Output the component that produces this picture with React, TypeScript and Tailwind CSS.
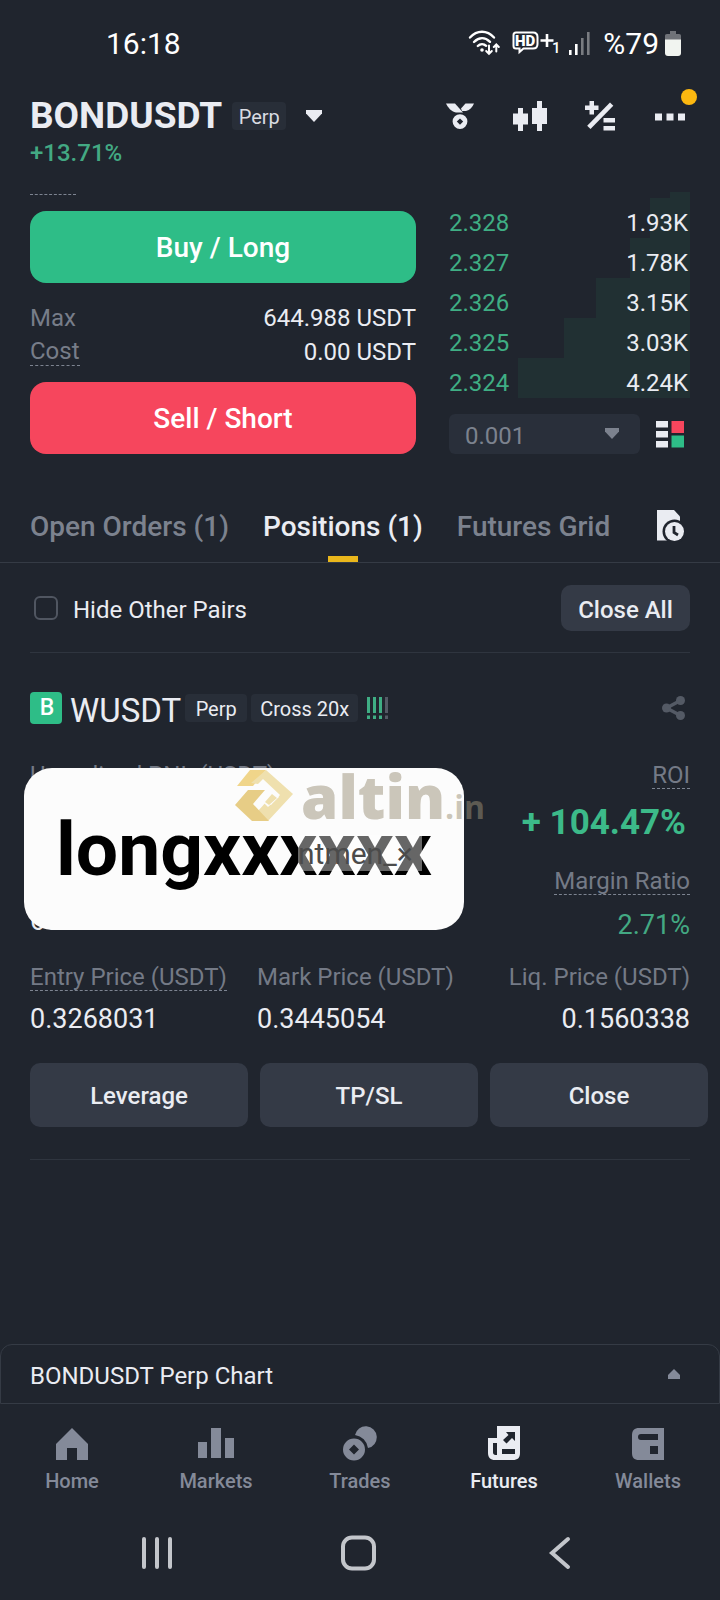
import { useState } from 'react'
import type { ReactNode } from 'react'

const bids = [
  { price: '2.328', amount: '1.93K', width: 40 },
  { price: '2.327', amount: '1.78K', width: 60 },
  { price: '2.326', amount: '3.15K', width: 94 },
  { price: '2.325', amount: '3.03K', width: 126 },
  { price: '2.324', amount: '4.24K', width: 172 },
]

const tabs = ['Open Orders (1)', 'Positions (1)', 'Futures Grid']

function StatusBar() {
  return (
    <div className="flex h-[92px] items-center justify-between pb-1.5 pr-[39px] pl-[106px] text-[30px] text-white">
      <span>16:18</span>
      <div className="flex items-center">
        <svg width="32" height="26" viewBox="0 0 32 26" fill="none" stroke="currentColor" strokeWidth="2.4" strokeLinecap="round">
          <path d="M2 7.5C9-.2 19-.2 26 7.5" />
          <path d="M6 12c5-5 11-5 16-.2" />
          <path d="M9.800 16c2.400-2.400 6-2.400 8.400-.2" />
          <circle cx="14" cy="20" r="1.800" fill="currentColor" stroke="none" />
          <path d="M21 15.500v8M18.200 21l2.800 2.800 2.800-2.800" strokeWidth="2" />
          <path d="M28.300 21.500v-7M25.800 17l2.500-2.600L30.800 17" strokeWidth="2" />
        </svg>
        <svg className="ml-3" width="48" height="26" viewBox="0 0 48 26" fill="none" stroke="currentColor">
          <path d="M4 2.500h17c3 0 4.500 1.800 4.500 4.500v7c0 3-1.500 4.500-4.500 4.500h-9.500L7.500 22v-3.500H4c-1.800 0-2.500-.8-2.500-2.500V5c0-1.700.7-2.500 2.500-2.500z" strokeWidth="2" />
          <text x="3" y="16" fontSize="15" fontWeight="900" fill="currentColor" stroke="none">HD</text>
          <path d="M28.500 10.500h13M35 4v13" strokeWidth="2.600" />
          <text x="40" y="23" fontSize="15" fontWeight="500" fill="currentColor" stroke="none">1</text>
        </svg>
        <svg className="ml-2" width="23" height="26" viewBox="0 0 23 26" fill="currentColor">
          <rect x="1" y="20" width="2.600" height="5" />
          <rect x="7" y="14" width="2.600" height="11" />
          <rect x="13" y="8" width="2.600" height="17" opacity=".4" />
          <rect x="19" y="2" width="2.600" height="23" opacity=".4" />
        </svg>
        <span className="ml-3">%79</span>
        <svg className="ml-1.5" width="16" height="25" viewBox="0 0 16 25">
          <path d="M5 0h6v3h3c1.500 0 2 .8 2 2v4H0V5c0-1.200.5-2 2-2h3z" fill="#6f7278" />
          <path d="M0 8.500h16V22c0 2-1 3-3 3H3c-2 0-3-1-3-3z" fill="#f1f4f0" />
        </svg>
      </div>
    </div>
  )
}

function Header() {
  return (
    <header className="pr-[33px] pl-[30px]">
      <div className="flex h-12 items-center justify-between">
        <button className="flex items-center" type="button">
          <span className="text-[37px] leading-10 font-bold">BONDUSDT</span>
          <span className="ml-2.5 flex h-7 w-[54px] items-center justify-center rounded bg-[#282e38] pt-0.5 text-xl text-[#d9dce2]">Perp</span>
          <svg className="ml-5" width="16" height="12" viewBox="0 0 16 12" fill="currentColor">
            <path d="M0 0h16v3.500L8 12 0 3.500z" />
          </svg>
        </button>
        <div className="flex items-center gap-9">
          <button type="button" aria-label="Rewards">
            <svg width="34" height="34" viewBox="0 0 34 34" fill="currentColor">
              <path d="M3 4.500h9l8 9h-7C8 12.500 5 8.500 3 4.500z" />
              <path d="M22.500 4.500H31c-1.500 3.500-4 6.500-8 7.500h-4l-1-2.500z" />
              <path fillRule="evenodd" d="M17 15.200a7.400 7.400 0 1 0 0 14.800 7.400 7.400 0 0 0 0-14.800zm0 4.200l3.200 3.200-3.200 3.200-3.200-3.200z" />
            </svg>
          </button>
          <button type="button" aria-label="Chart">
            <svg width="34" height="34" viewBox="0 0 34 34" fill="currentColor">
              <path d="M5 9h5v5.500h5v11h-5V32H5v-6.500H0v-11h5z" />
              <path d="M24 2h5v7h5v16h-5v7h-5v-7h-5V9h5z" />
            </svg>
          </button>
          <button type="button" aria-label="Calculator">
            <svg width="34" height="34" viewBox="0 0 34 34" fill="currentColor">
              <path d="M6.500 2h4.500v4.500h4.500V11H11v4.500H6.500V11H2V6.500h4.500z" />
              <path d="M27 3.500l3.300 3.300L7.500 30l-3.300-3.300z" />
              <path d="M20.500 19H32v4.500H20.500zM20.500 27H32v4.500H20.500z" />
            </svg>
          </button>
          <button type="button" aria-label="More" className="relative">
            <svg width="34" height="34" viewBox="0 0 34 34" fill="currentColor">
              <path d="M2 14.500h7v7H2zM13.500 14.500h7v7h-7zM25 14.500h7v7h-7z" />
            </svg>
            <span className="absolute -top-2.5 -right-2.5 size-4 rounded-full bg-[#fcb810]" />
          </button>
        </div>
      </div>
      <p className="pt-0.5 text-2xl leading-[22px] font-medium text-[#43a983]">+13.71%</p>
    </header>
  )
}

function OrderForm() {
  return (
    <div className="flex-[386]">
      <div className="h-[31px] w-[46px] border-b border-dashed border-[#7d8491]" />
      <button type="button" className="mt-4 h-[72px] w-full rounded-2xl bg-[#2ebd87] pt-0.5 text-[28px] font-medium text-white">Buy / Long</button>
      <dl className="mt-4 text-2xl">
        <div className="flex h-[34px] items-center justify-between">
          <dt className="pt-1 text-[#777d89]">Max</dt>
          <dd className="pt-1">644.988 USDT</dd>
        </div>
        <div className="flex h-[34px] items-center justify-between">
          <dt className="border-b border-dashed border-[#7d8491] pt-0.5 leading-7 text-[#777d89]">Cost</dt>
          <dd className="pt-1">0.00 USDT</dd>
        </div>
      </dl>
      <button type="button" className="mt-[15px] h-[72px] w-full rounded-2xl bg-[#f6465d] pt-0.5 text-[28px] font-medium text-white">Sell / Short</button>
    </div>
  )
}

function OrderBook() {
  return (
    <div className="flex-[241] pt-7">
      <div className="flex justify-end">
        <div className="h-1.5 w-5 bg-[#213033]" />
      </div>
      {bids.map((bid) => (
        <div key={bid.price} className="relative flex h-10 items-center justify-between pt-2.5 text-2xl">
          <div className="absolute inset-y-0 right-0 bg-[#213033]" style={{ width: bid.width }} />
          <span className="relative text-[#3fae84]">{bid.price}</span>
          <span className="relative pr-0.5">{bid.amount}</span>
        </div>
      ))}
      <div className="mt-4 flex items-center justify-between pr-1.5">
        <div className="relative w-[191px]">
          <select aria-label="Tick size" className="h-10 w-full appearance-none rounded-md bg-[#292f3a] pt-1 pl-4 text-2xl text-[#7c828e]">
            <option>0.001</option>
          </select>
          <svg className="pointer-events-none absolute top-3.5 right-[21px]" width="14" height="11" viewBox="0 0 14 11" fill="#7c828e">
            <path d="M0 0h14v3.500L7 11 0 3.500z" />
          </svg>
        </div>
        <button type="button" aria-label="Order book layout">
          <svg width="28" height="28" viewBox="0 0 28 28">
            <path d="M0 1h12v6.500H0zM0 11h12v6.500H0zM0 21h12v6.500H0z" fill="#eaecf2" />
            <path d="M15.500 1H28v12H15.500z" fill="#f6465d" />
            <path d="M15.500 15.500H28v12H15.500z" fill="#2ebd87" />
          </svg>
        </button>
      </div>
    </div>
  )
}

function Tabs() {
  const [active, setActive] = useState(tabs[1])

  return (
    <nav className="mt-9 flex h-[73px] items-center gap-[34px] border-b border-[#353b45] pr-[34px] pl-[30px]">
      {tabs.map((tab) => (
        <button
          key={tab}
          type="button"
          onClick={() => setActive(tab)}
          className={`relative h-full pt-0.5 text-[28px] font-medium ${tab === active ? 'text-[#eaecf2]' : 'text-[#7c828e]'}`}
        >
          {tab}
          {tab === active && <span className="absolute bottom-0 left-1/2 h-1.5 w-[30px] -translate-x-1/2 bg-[#eab71c]" />}
        </button>
      ))}
      <button type="button" aria-label="Order history" className="ml-auto">
        <svg width="30" height="34" viewBox="0 0 30 34">
          <path d="M1 1h17l6 6.500v9L12 31.500H1z" fill="#eaecf2" />
          <circle cx="18.500" cy="22.500" r="12" fill="#20252e" />
          <circle cx="18.500" cy="22.500" r="9.500" fill="#eaecf2" />
          <path d="M18 17v6.500l4 2.500" fill="none" stroke="#20252e" strokeWidth="2.800" />
        </svg>
      </button>
    </nav>
  )
}

function Filters() {
  return (
    <div className="mx-[30px] flex h-[90px] items-center justify-between border-b border-[#2f353f]">
      <label className="flex items-center gap-[15px] pl-1 text-2xl">
        <input type="checkbox" className="size-6 appearance-none rounded-md border-2 border-[#505661]" />
        <span className="pt-1">Hide Other Pairs</span>
      </label>
      <button type="button" className="h-[46px] w-[129px] rounded-[10px] bg-[#343a46] pt-1 text-2xl font-medium">Close All</button>
    </div>
  )
}

function Sticker() {
  return (
    <div className="absolute top-[5px] left-6 flex h-[162px] w-[440px] items-center justify-center rounded-[28px] bg-[#fcfcfc]">
      <span className="text-[75px] leading-none font-bold text-black">longxxxxxx</span>
      <span className="absolute top-[67px] left-[274px] flex h-9 w-[124px] items-center bg-white/40 text-[30px] text-[#4b4b4b]">ntmen_×</span>
      <div className="absolute top-0 left-[211px] flex items-baseline font-['Open_Sans',sans-serif] text-[#9a9077]/50">
        <svg className="mr-1.5 self-center" width="60" height="52" viewBox="0 0 60 52">
          <path d="M15 0h16L18 16H2z" fill="#f0d58a" />
          <path d="M31 0l27 24-25 27-10-10 9-10 4 4 9-10-17-16-5 5-7-1z" fill="#efe0ae" />
          <path d="M38 20l6 7-11 10-6-6z" fill="#fcfcfc" />
          <path d="M37 24l5 4-8 7-4-3z" fill="#efe0ae" />
          <path d="M13 20h17L18 34l16 17H17L0 35z" fill="#e7cd86" />
        </svg>
        <span className="text-[60px] leading-[56px] font-extrabold">altin</span>
        <span className="text-[32px] leading-none font-bold">.in</span>
      </div>
    </div>
  )
}

function Position() {
  return (
    <section>
      <div className="flex h-[110px] items-center justify-between pr-[34px] pl-[30px]">
        <div className="flex items-center">
          <span className="flex size-8 items-center justify-center rounded bg-[#2ebd87] pl-0.5 text-[23px] font-medium text-white">B</span>
          <span className="ml-2 pt-1.5 text-[33px] leading-8">WUSDT</span>
          <span className="ml-1 flex h-7 w-[62px] items-center justify-center rounded bg-[#282e38] pt-0.5 text-xl">Perp</span>
          <span className="ml-1 flex h-7 w-[107px] items-center justify-center rounded bg-[#282e38] pt-0.5 text-xl">Cross 20x</span>
          <svg className="ml-[9px]" width="22" height="22" viewBox="0 0 22 22" fill="#3fae84">
            <path d="M0 0h3v16H0zM6 0h3v16H6zM12 0h3v16h-3zM0 18.500h3V22H0zM6 18.500h3V22H6zM12 18.500h3V22h-3z" />
            <path d="M18 0h3v16h-3zM18 18.500h3V22h-3z" fill="#545a65" />
          </svg>
        </div>
        <button type="button" aria-label="Share" className="text-[#545a65]">
          <svg width="24" height="24" viewBox="0 0 24 24" fill="currentColor" stroke="currentColor">
            <circle cx="4.500" cy="12" r="4.500" stroke="none" />
            <circle cx="18.500" cy="4.500" r="4.500" stroke="none" />
            <circle cx="18.500" cy="19.500" r="4.500" stroke="none" />
            <path d="M18.500 4.500L4.500 12l14 7.500" fill="none" strokeWidth="3.500" />
          </svg>
        </button>
      </div>

      <div className="relative px-[30px] text-[#eaecf2]">
        <div className="flex justify-between text-2xl leading-[25px] text-[#747a86]">
          <span>Unrealized PNL (USDT)</span>
          <span className="border-b border-dashed border-[#7d8491]">ROI</span>
        </div>
        <p className="mt-3.5 pr-1 text-right text-[35px] leading-10 font-bold text-[#3cba89]">+ 104.47%</p>
        <div className="mt-[26px] flex justify-end text-2xl leading-[25px] text-[#747a86]">
          <span className="border-b border-dashed border-[#7d8491]">Margin Ratio</span>
        </div>
        <div className="mt-3.5 flex justify-between text-[27px] leading-8">
          <span className="leading-6">65.0777</span>
          <span className="text-[#43a983]">2.71%</span>
        </div>
        <div className="mt-6 grid grid-cols-[227fr_216fr_217fr] text-2xl leading-[25px] whitespace-nowrap text-[#747a86]">
          <span className="justify-self-start border-b border-dashed border-[#7d8491]">Entry Price (USDT)</span>
          <span>Mark Price (USDT)</span>
          <span className="justify-self-end">Liq. Price (USDT)</span>
        </div>
        <div className="mt-3 grid grid-cols-[227fr_216fr_217fr] text-[27px] leading-8">
          <span>0.3268031</span>
          <span>0.3445054</span>
          <span className="text-right">0.1560338</span>
        </div>
        <Sticker />
      </div>

      <div className="mt-7 flex gap-3 pr-3 pl-[30px] text-2xl font-medium">
        <button type="button" className="h-16 flex-1 rounded-[10px] bg-[#343a46] pt-0.5">Leverage</button>
        <button type="button" className="h-16 flex-1 rounded-[10px] bg-[#343a46] pt-0.5">TP/SL</button>
        <button type="button" className="h-16 flex-1 rounded-[10px] bg-[#343a46] pt-0.5">Close</button>
      </div>
      <div className="mx-[30px] mt-8 border-b border-[#2f353f]" />
    </section>
  )
}

function NavItem({ label, active, children }: { label: string; active?: boolean; children: ReactNode }) {
  return (
    <a href="#" className={`flex flex-1 flex-col items-center gap-[7px] text-xl leading-6 font-medium ${active ? 'text-[#eaecf2]' : 'text-[#848a99]'}`}>
      <svg width="36" height="36" viewBox="0 0 36 36" fill="currentColor">{children}</svg>
      {label}
    </a>
  )
}

function BottomNav() {
  return (
    <nav className="flex h-[102px] pt-[22px]">
      <NavItem label="Home">
        <path d="M18 2l16 16v16H23V22H13v12H2V18z" />
      </NavItem>
      <NavItem label="Markets">
        <path d="M0 16h9v16H0zM13 2h10v30H13zM27 12h9v20h-9z" />
      </NavItem>
      <NavItem label="Trades">
        <path d="M13 9A11 11 0 1 1 26 22 15 15 0 0 0 13 9z" />
        <path fillRule="evenodd" d="M12 12.500a11 11 0 1 0 0 22 11 11 0 0 0 0-22zm0 6l5 5-5 5-5-5z" />
      </NavItem>
      <NavItem label="Futures" active>
        <path d="M11 0h23v27c0 5-2.500 7-7 7H9c-4.500 0-7-2.500-7-7V12h9z" />
        <path d="M7 17h4v12H9.500C8 29 7 28 7 26.500zM16 23h13v5H16zM20 6h9v9l-3-3-5.500 5.500-3.500-3.500L22.500 9z" fill="#20252e" />
      </NavItem>
      <NavItem label="Wallets">
        <path d="M9 2h25v32H9c-5 0-7-2.500-7-7V9c0-4.500 2.500-7 7-7z" />
        <path d="M11 8h17v6H11a3 3 0 0 1 0-6zM20 20h8v8h-8z" fill="#20252e" />
      </NavItem>
    </nav>
  )
}

function SystemNav() {
  return (
    <div className="flex h-[94px] items-center justify-between px-[138px] text-[#c3c6cb]">
      <button type="button" aria-label="Recents">
        <svg width="40" height="40" viewBox="0 0 40 40" stroke="currentColor" strokeWidth="4" strokeLinecap="round">
          <path d="M6 6v28M19 6v28M32 6v28" />
        </svg>
      </button>
      <button type="button" aria-label="Home screen">
        <svg width="40" height="40" viewBox="0 0 40 40" fill="none" stroke="currentColor" strokeWidth="4">
          <rect x="3" y="4.500" width="31" height="31" rx="9" />
        </svg>
      </button>
      <button type="button" aria-label="Back">
        <svg width="40" height="40" viewBox="0 0 40 40" fill="none" stroke="currentColor" strokeWidth="4" strokeLinecap="round">
          <path d="M26 6L10 20l16 14" />
        </svg>
      </button>
    </div>
  )
}

export default function App() {
  return (
    <div className="flex min-h-screen flex-col bg-[#20252e] font-[Roboto,sans-serif] text-[#eaecf2]">
      <StatusBar />
      <Header />
      <main className="flex flex-1 flex-col">
        <div className="flex gap-[33px] px-[30px]">
          <OrderForm />
          <OrderBook />
        </div>
        <Tabs />
        <Filters />
        <Position />
      </main>
      <button type="button" className="flex h-[60px] items-center justify-between rounded-t-xl border border-[#353b45] pr-[39px] pl-[29px] text-2xl">
        <span className="pt-1">BONDUSDT Perp Chart</span>
        <svg width="12" height="10" viewBox="0 0 12 10" fill="#848a99">
          <path d="M6 0l6 6v4H0V6z" />
        </svg>
      </button>
      <BottomNav />
      <SystemNav />
    </div>
  )
}
